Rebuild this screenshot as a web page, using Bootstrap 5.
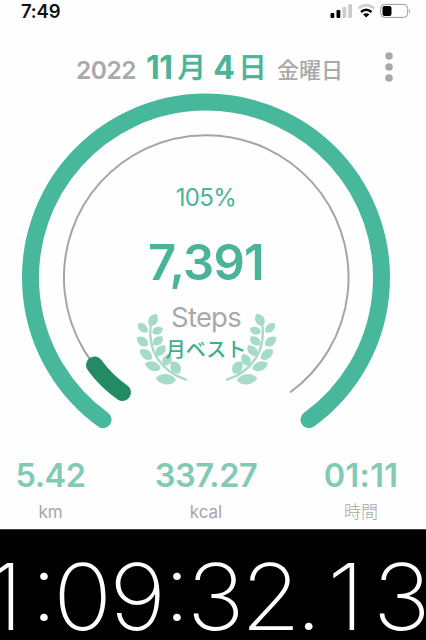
<!DOCTYPE html>
<html lang="ja">
<head>
<meta charset="utf-8">
<meta name="viewport" content="width=device-width, initial-scale=1">
<title>Steps</title>
<link href="https://cdn.jsdelivr.net/npm/bootstrap@5.3.0/dist/css/bootstrap.min.css" rel="stylesheet">
<style>
body{font-family:Inter,"Noto Sans CJK JP",sans-serif;width:426px;height:640px;overflow:hidden;background:#fefefe;line-height:1}
.status{height:26px;padding:2px 15px 0 21px}
.clock{font-size:18.5px;font-weight:600;color:#111;line-height:19px;letter-spacing:-.2px}
.dateline{height:68px;padding-left:76px}
.dateline>span{line-height:40px;height:40px;white-space:nowrap}
.year{font-size:24.5px;font-weight:600;color:#a9a9a9;letter-spacing:-.5px;width:70px}
.day{font-size:32px;font-weight:700;color:#4bb498;width:131px;letter-spacing:-.6px;margin-top:22px}
.day b{font-size:28.5px;font-weight:500;line-height:1;vertical-align:1px;-webkit-text-stroke:.4px #4bb498}
.day b:first-of-type{margin:0 8px 0 5px}
.day b:last-of-type{margin-left:4px}
.wday{font-size:22px;font-weight:500;color:#a9a9a9;width:107px}
.gauge{display:grid;height:358px}
.gauge>*{grid-area:1/1}
.gauge svg{overflow:visible}
.reading{width:412px;padding-top:91px;z-index:1}
.pct{font-size:24px;font-weight:400;color:#4bb498;height:54px;line-height:26px;letter-spacing:-.6px}
.count{font-size:49px;font-weight:600;color:#4bb498;height:63px;line-height:48px;letter-spacing:-.8px}
.unit{font-size:27.5px;color:#a9a9a9;height:31px;line-height:30px;letter-spacing:-.8px}
.best{font-size:20px;font-weight:500;color:#3fae90;line-height:34px}
.stats{height:77px;padding-top:7px}
.stats>div{width:210px}
.stats>div:first-child{width:101px}
.stats>div:last-child{width:100px}
.val{font-size:32.5px;font-weight:600;color:#82cab5;line-height:34px;letter-spacing:-.5px}
.stats>div:last-child .val{letter-spacing:.3px}
.lab{font-size:17px;font-weight:400;color:#a6a6a6;line-height:24px;margin-top:7px}
.stats>div:last-child .lab{font-weight:300}
.timer{height:111px;background:#000;border-top:1px solid #444;color:#fff;font-size:92px;font-weight:200;line-height:92px;padding-top:21px;margin-left:-23px;width:460px}
.timer span{width:55.5px;flex:none;display:flex;justify-content:center;transform:scaleX(1.06)}
.timer .sep{width:22px}
.timer .colon{margin-top:-9px}
.timer .point{width:19.5px}
</style>
</head>
<body>
<header class="status d-flex justify-content-between align-items-start">
<span class="clock">7:49</span>
<svg width="82" height="20" viewBox="329 2 82 20"><g><rect x="330.500" y="13" width="3.800" height="5" rx="1"/><rect x="336.500" y="10" width="3.800" height="8" rx="1"/><g fill="#ccc"><rect x="342.500" y="7" width="3.800" height="11" rx="1"/><rect x="348.200" y="4" width="3.800" height="14" rx="1"/></g></g>
<g fill="none" stroke-width="2.500"><path d="M358.500 8.300Q366 2 374 8.300" stroke="#ccc"/><path d="M361 12Q366 7.500 371.500 12" stroke="#000"/></g><path d="M363 14.300Q366 12 369.500 14.300L366.200 17.500Z"/>
<rect x="380.700" y="4.400" width="27" height="13" rx="4" fill="none" stroke="#999"/><rect x="382.500" y="6" width="9" height="10" rx="2"/><path d="M409 9q2 2 0 4z" fill="#999"/></svg>
</header>
<div class="dateline d-flex">
<span class="year mt-4">2022</span><span class="day">11<b>月</b>4<b>日</b></span><span class="wday mt-4">金曜日</span>
<svg width="10" height="68" viewBox="384 26 10 68" fill="#a9a9a9"><circle cx="389" cy="56" r="3.800"/><circle cx="389" cy="67" r="3.800"/><circle cx="389" cy="78" r="3.800"/></svg>
</div>
<main class="gauge">
<svg width="426" height="358" viewBox="0 94 426 358" fill="none">
<path d="M103 419.700A175.500 175.500 0 1 1 309 419.700" stroke="#48b89d" stroke-width="17" stroke-linecap="round"/>
<path d="M122.500 392.500A142.300 142.300 0 1 1 290 392.500" stroke="#a5a5a5" stroke-width="2"/>
<path d="M94.500 365Q106 381 122.500 392.500" stroke="#218c62" stroke-width="17" stroke-linecap="round"/>
<defs>
<path id="leaf" d="M0 0C2-6 8-5 10.600 0C8 6 2 5 0 0Z"/>
<g id="laurel" transform="translate(134.700 310) scale(.3333)" fill="#a6dbca">
<path d="M48 46C38 120 78 185 154 209" fill="none" stroke="#a6dbca" stroke-width="7" stroke-linecap="round"/>
<use href="#leaf" transform="translate(46 48) rotate(-63) scale(3.900 3.300)"/>
<use href="#leaf" transform="translate(39 66) rotate(-139) scale(3.700 2.900)"/>
<use href="#leaf" transform="translate(40 106) rotate(-145) scale(3.900 3.200)"/>
<use href="#leaf" transform="translate(52 147) rotate(-143) scale(4.300 3.300)"/>
<use href="#leaf" transform="translate(78 176) rotate(-162) scale(4.700 3.400)"/>
<use href="#leaf" transform="translate(124 210) rotate(-176) scale(5.800 3.800)"/>
<use href="#leaf" transform="translate(53 69) rotate(-24) scale(3.300 2.800)"/>
<use href="#leaf" transform="translate(55 105) rotate(-41) scale(3.600 3)"/>
<use href="#leaf" transform="translate(65 137) rotate(-50) scale(3.800 3.100)"/>
<use href="#leaf" transform="translate(88 167) rotate(-63) scale(3.800 3.200)"/>
<use href="#leaf" transform="translate(135 190) rotate(-126) scale(4.100 3.700)"/>
</g></defs>
<use href="#laurel"/><use href="#laurel" transform="translate(413 0) scale(-1 1)"/>
</svg>
<div class="reading text-center"><div class="pct">105%</div><div class="count">7,391</div><div class="unit">Steps</div><div class="best">月ベスト</div></div>
</main>
<section class="stats d-flex text-center"><div><div class="val">5.42</div><div class="lab">km</div></div><div><div class="val">337.27</div><div class="lab">kcal</div></div><div><div class="val">01:11</div><div class="lab">時間</div></div></section>
<footer class="timer d-flex"><span>1</span><span class="sep colon">:</span><span>0</span><span>9</span><span class="sep colon">:</span><span>3</span><span>2</span><span class="sep point">.</span><span>1</span><span>3</span></footer>
</body>
</html>
